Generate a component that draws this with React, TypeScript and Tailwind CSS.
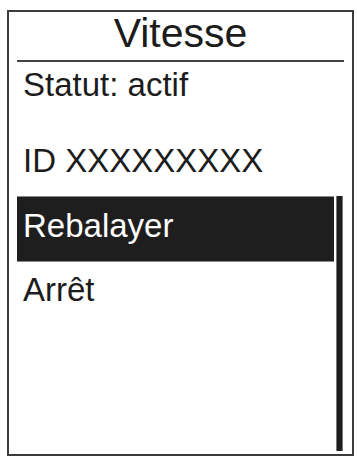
import React from "react";

export default function App() {
  return (
    <div className="w-[357px] h-[456px] bg-white overflow-hidden" style={{ fontFamily: '"Liberation Sans", Arial, sans-serif' }}>
      <div className="ml-[7px] mt-[10px] w-[347px] h-[446px] border-2 border-[#3c3c3c] flex flex-col text-[#1c1c1c]">
        <div className="h-[48px] pt-[1px] text-center text-[41px] leading-[41px]">Vitesse</div>
        <div className="mx-[8px] h-[2px] bg-[#444]" />
        <div className="mx-[8px] px-[6px] pt-[6px] text-[33px] leading-[33px]">Statut: actif</div>
        <div className="mx-[8px] px-[6px] mt-[43px] text-[33px] leading-[33px]">ID XXXXXXXXX</div>
        <div className="mx-[8px] mt-[19px] h-[255px] flex gap-[2px]">
          <div className="flex-1 flex flex-col">
            <div className="h-[66px] border-y border-[#8a8a8a] bg-[#1e1e1e] text-white px-[6px] pt-[12px] text-[33px] leading-[33px]">
              Rebalayer
            </div>
            <div className="px-[6px] mt-[11px] text-[33px] leading-[33px]">Arrêt</div>
          </div>
          <div className="w-[7px] h-full bg-[#1e1e1e] border-x border-[#777] mr-[1px]" />
        </div>
      </div>
    </div>
  );
}
